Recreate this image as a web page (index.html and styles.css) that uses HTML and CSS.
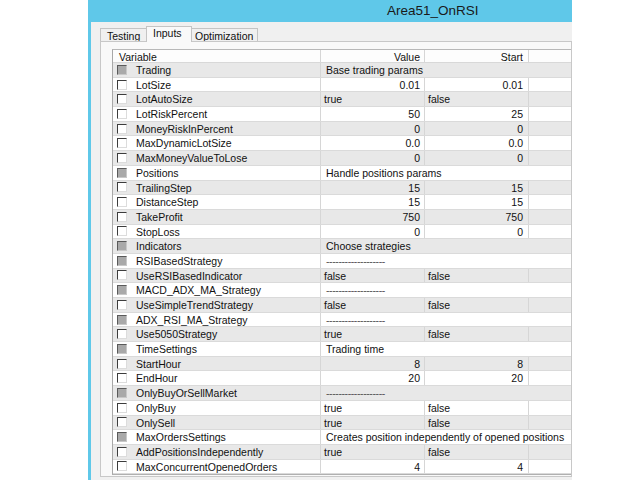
FILE: index.html
```html
<!DOCTYPE html>
<html>
<head>
<meta charset="utf-8">
<link rel="stylesheet" href="styles.css">
</head>
<body>
<div class="window">
  <div class="titlebar"><span class="title">Area51_OnRSI</span></div>
  <div class="client">
    <div class="tabs">
      <div class="tab t1">Testing</div>
      <div class="tab t2 active">Inputs</div>
      <div class="tab t3">Optimization</div>
    </div>
    <div class="panel">
      <div class="grid">
        <div class="row head"><div class="c var">Variable</div><div class="c num">Value</div><div class="c num start">Start</div><div class="c"></div></div>

        <div class="row grp odd"><div class="c var"><span class="cb"></span>Trading</div><div class="c desc">Base trading params</div></div>
        <div class="row"><div class="c var"><span class="cb"></span>LotSize</div><div class="c num">0.01</div><div class="c num start">0.01</div><div class="c"></div></div>
        <div class="row odd"><div class="c var"><span class="cb"></span>LotAutoSize</div><div class="c txt">true</div><div class="c txt">false</div><div class="c"></div></div>
        <div class="row"><div class="c var"><span class="cb"></span>LotRiskPercent</div><div class="c num">50</div><div class="c num start">25</div><div class="c"></div></div>
        <div class="row odd"><div class="c var"><span class="cb"></span>MoneyRiskInPercent</div><div class="c num">0</div><div class="c num start">0</div><div class="c"></div></div>
        <div class="row"><div class="c var"><span class="cb"></span>MaxDynamicLotSize</div><div class="c num">0.0</div><div class="c num start">0.0</div><div class="c"></div></div>
        <div class="row odd"><div class="c var"><span class="cb"></span>MaxMoneyValueToLose</div><div class="c num">0</div><div class="c num start">0</div><div class="c"></div></div>
        <div class="row grp"><div class="c var"><span class="cb"></span>Positions</div><div class="c desc">Handle positions params</div></div>
        <div class="row odd"><div class="c var"><span class="cb"></span>TrailingStep</div><div class="c num">15</div><div class="c num start">15</div><div class="c"></div></div>
        <div class="row"><div class="c var"><span class="cb"></span>DistanceStep</div><div class="c num">15</div><div class="c num start">15</div><div class="c"></div></div>
        <div class="row odd"><div class="c var"><span class="cb"></span>TakeProfit</div><div class="c num">750</div><div class="c num start">750</div><div class="c"></div></div>
        <div class="row"><div class="c var"><span class="cb"></span>StopLoss</div><div class="c num">0</div><div class="c num start">0</div><div class="c"></div></div>
        <div class="row grp odd"><div class="c var"><span class="cb"></span>Indicators</div><div class="c desc">Choose strategies</div></div>
        <div class="row grp"><div class="c var"><span class="cb"></span>RSIBasedStrategy</div><div class="c desc dash">-------------------</div></div>
        <div class="row odd"><div class="c var"><span class="cb"></span>UseRSIBasedIndicator</div><div class="c txt">false</div><div class="c txt">false</div><div class="c"></div></div>
        <div class="row grp"><div class="c var"><span class="cb"></span>MACD_ADX_MA_Strategy</div><div class="c desc dash">-------------------</div></div>
        <div class="row odd"><div class="c var"><span class="cb"></span>UseSimpleTrendStrategy</div><div class="c txt">false</div><div class="c txt">false</div><div class="c"></div></div>
        <div class="row grp"><div class="c var"><span class="cb"></span>ADX_RSI_MA_Strategy</div><div class="c desc dash">-------------------</div></div>
        <div class="row odd"><div class="c var"><span class="cb"></span>Use5050Strategy</div><div class="c txt">true</div><div class="c txt">false</div><div class="c"></div></div>
        <div class="row grp"><div class="c var"><span class="cb"></span>TimeSettings</div><div class="c desc">Trading time</div></div>
        <div class="row odd"><div class="c var"><span class="cb"></span>StartHour</div><div class="c num">8</div><div class="c num start">8</div><div class="c"></div></div>
        <div class="row"><div class="c var"><span class="cb"></span>EndHour</div><div class="c num">20</div><div class="c num start">20</div><div class="c"></div></div>
        <div class="row grp odd"><div class="c var"><span class="cb"></span>OnlyBuyOrSellMarket</div><div class="c desc dash">-------------------</div></div>
        <div class="row"><div class="c var"><span class="cb"></span>OnlyBuy</div><div class="c txt">true</div><div class="c txt">false</div><div class="c"></div></div>
        <div class="row odd"><div class="c var"><span class="cb"></span>OnlySell</div><div class="c txt">true</div><div class="c txt">false</div><div class="c"></div></div>
        <div class="row grp"><div class="c var"><span class="cb"></span>MaxOrdersSettings</div><div class="c desc">Creates position independently of opened positions</div></div>
        <div class="row odd"><div class="c var"><span class="cb"></span>AddPositionsIndependently</div><div class="c txt">true</div><div class="c txt">false</div><div class="c"></div></div>
        <div class="row"><div class="c var"><span class="cb"></span>MaxConcurrentOpenedOrders</div><div class="c num">4</div><div class="c num start">4</div><div class="c"></div></div>
      </div>
    </div>
  </div>
</div>
</body>
</html>
```
FILE: styles.css
```css
html, body {
  margin: 0;
  padding: 0;
  background: #ffffff;
  height: 480px;
  overflow: hidden;
}
body {
  font-family: "Liberation Sans", Arial, sans-serif;
  font-size: 10.5px;
  color: #111;
}
.window {
  margin-left: 88px;
  width: 481px;
  height: 480px;
  border-left: 3px solid #5fc8e9;
  background: #f0f0f0;
  overflow: hidden;
}
.titlebar {
  height: 22px;
  background: #5fc8e9;
  margin-left: -3px;
  padding-left: 299px;
  font-size: 13.5px;
  line-height: 22px;
  color: #1a1a1a;
}
.client {
  padding-left: 9px;
}
.tabs {
  display: flex;
  align-items: flex-end;
  height: 19px;
  position: relative;
  z-index: 1;
}
.tab {
  box-sizing: border-box;
  height: 13px;
  line-height: 14px;
  border: 1px solid #c4c4c4;
  border-bottom: none;
  background: #f0f0f0;
  overflow: hidden;
}
.t1 { width: 47px; padding-left: 6px; }
.t2 { width: 46px; padding-left: 6px; margin-left: -1px; }
.t3 { width: 67px; padding-left: 3px; margin-left: -1px; }
.tab.active {
  height: 16px;
  line-height: 13px;
  background: #f9f9f9;
  margin-bottom: -1px;
  position: relative;
  z-index: 2;
}
.panel {
  border: 1px solid #c8c8c8;
  background: #f9f9f9;
  padding: 7px 0 2px 11px;
  height: 425px;
}
.grid {
  border-top: 1px solid #b8b8b8;
  border-left: 1px solid #a8a8a8;
  border-bottom: 1px solid #b0b0b0;
  background: #fff;
}
.row {
  display: grid;
  grid-template-columns: 207px 104px 104px 80px;
  height: 14.7px;
  box-sizing: border-box;
  border-bottom: 1px solid #dadada;
  background: #ffffff;
}
.row.odd {
  background: #e8e8e8;
}
.row.head {
  height: 13px;
  background: #fdfdfd;
  border-bottom: 1px solid #d8d8d8;
}
.c {
  border-left: 1px solid #d6d6d6;
  white-space: nowrap;
  overflow: hidden;
  box-sizing: border-box;
  padding-top: 1px;
  line-height: 12.7px;
}
.row.head .c {
  line-height: 12px;
  padding-top: 1px;
}
.c.var {
  border-left: none;
  padding-left: 4px;
  display: flex;
  align-items: center;
}
.row.head .c.var {
  padding-left: 6px;
}
.c.num {
  text-align: right;
  padding-right: 4px;
}
.c.num.start {
  padding-right: 5px;
}
.c.txt {
  padding-left: 3px;
}
.c.desc {
  grid-column: 2 / 5;
  padding-left: 5px;
}
.c.dash {
  color: #555;
  letter-spacing: -0.4px;
}
.cb {
  width: 8px;
  height: 8px;
  border: 1px solid;
  border-color: #3c3c3c #dcdcdc #dcdcdc #3c3c3c;
  background: #fff;
  margin-right: 9px;
  margin-top: -1px;
  flex: none;
}
.grp .cb {
  background: #a9a9a9;
  border-color: #5a5a5a #c8c8c8 #c8c8c8 #5a5a5a;
}
```
